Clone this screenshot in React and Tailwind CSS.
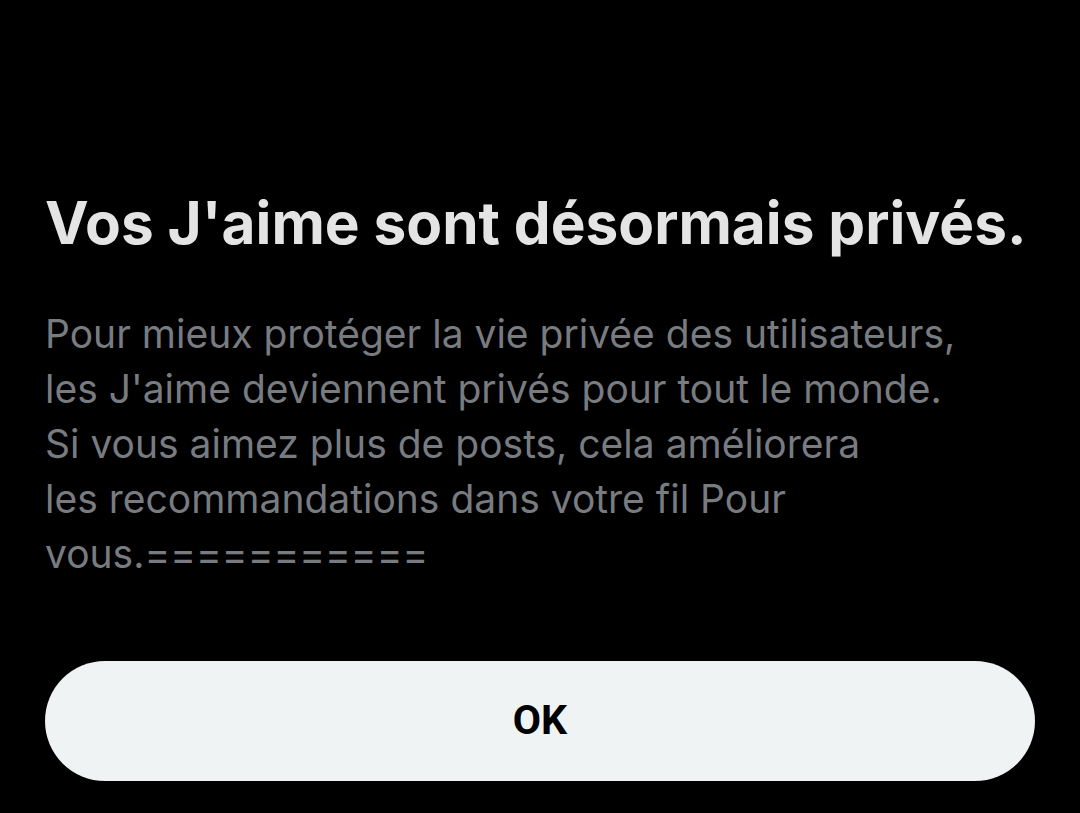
const LINES = [
  "Pour mieux protéger la vie privée des utilisateurs,",
  "les J'aime deviennent privés pour tout le monde.",
  "Si vous aimez plus de posts, cela améliorera",
  "les recommandations dans votre fil Pour",
  "vous.===========",
];

export default function App() {
  return (
    <div className="flex h-[813px] w-[1080px] flex-col bg-black px-[45px] pt-[188px] font-['Inter',sans-serif]">
      <h1 className="whitespace-nowrap text-[58.5px] font-bold leading-[70px] text-[#e4e4e4]">
        Vos J'aime sont désormais privés.
      </h1>
      <div className="mt-[48px] flex flex-col text-[39px] leading-[55px] text-[#787c81]">
        {LINES.map((l) => (
          <p key={l} className="whitespace-nowrap">{l}</p>
        ))}
      </div>
      <button className="mt-[80px] flex h-[120px] w-[990px] items-center justify-center rounded-full bg-[#eff3f4] font-['Roboto',sans-serif] text-[41px] font-bold text-black">
        OK
      </button>
    </div>
  );
}
